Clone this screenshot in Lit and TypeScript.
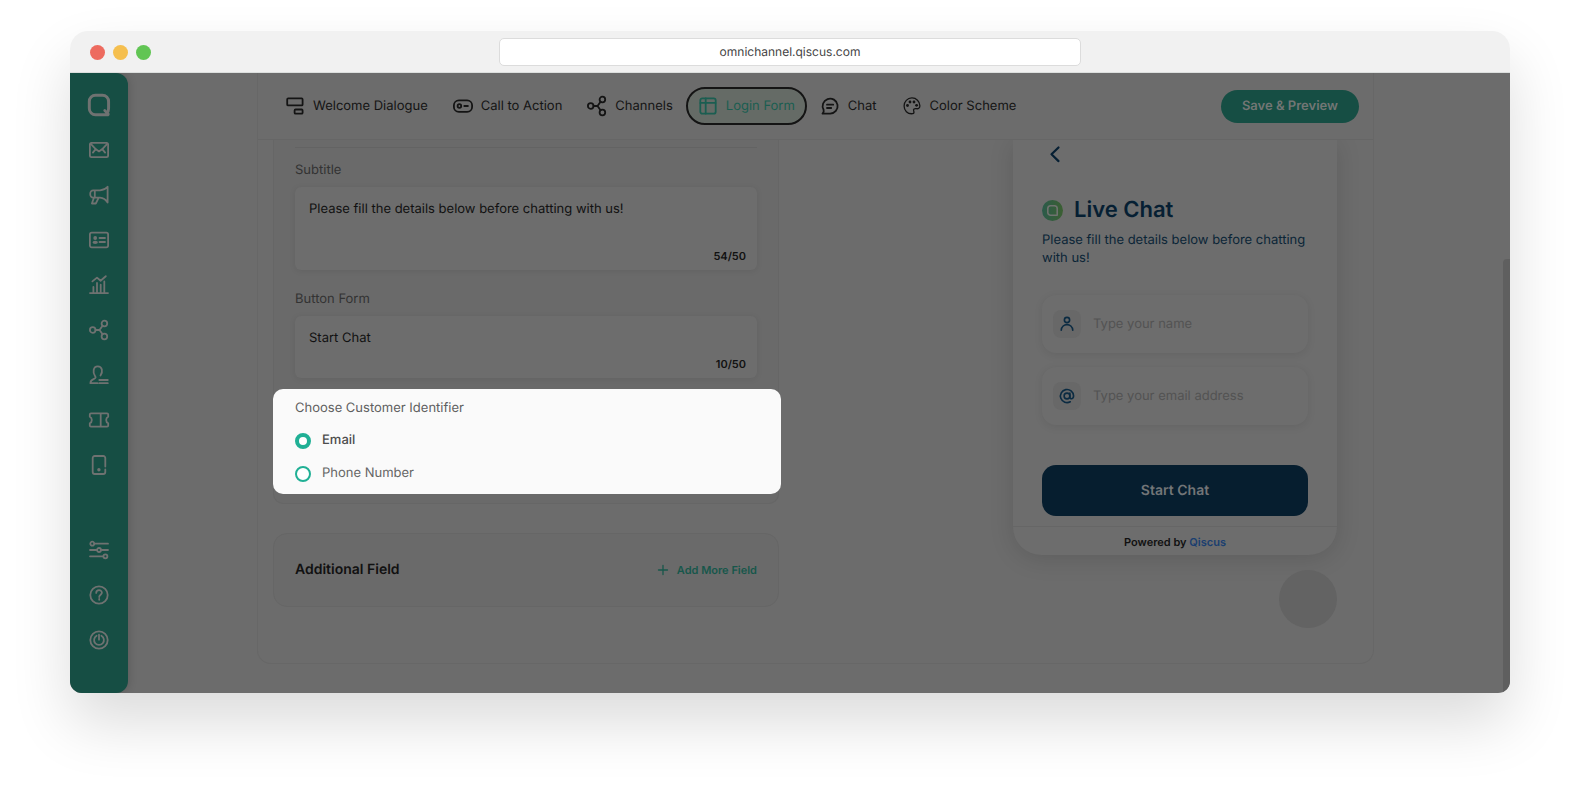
import { LitElement, html, css, svg, TemplateResult } from "lit";
import { customElement, property, state } from "lit/decorators.js";
import { classMap } from "lit/directives/class-map.js";

const icons: Record<string, TemplateResult> = {
  logo: svg`<path d="M15 19.400H8.300A5.600 5.600 0 0 1 2.400 13.600V7.300A5.600 5.600 0 0 1 8 1.600h6.300a5.600 5.600 0 0 1 5.600 5.700v6.300c0 2-.8 3.600-1.600 4.200l1 1.600Z" transform="translate(-1.200 -.5)" stroke-width="2.700"/><path d="M15.200 15l3.200 3.200" stroke-width="2.500"/>`,
  mail: svg`<rect x=".9" y="2.800" width="18.200" height="14.400" rx="1.600"/><path d="M1.800 3.800l4.900 5.300L10 11.400l3.300-2.300 4.900-5.300M6.700 9.100 3.900 12.600M13.300 9.100l2.800 3.500"/>`,
  megaphone: svg`<path d="M18.600 1.800v15.800c-2-3.200-4.600-4.700-7.600-4.900H4.200a3 3.700 0 0 1 0-7.400H11c3-.2 5.600-1 7.600-3.500ZM5.800 5.300v7.400M4.900 12.800l-2 5.700h3.900l2.800-5.600"/>`,
  contact: svg`<rect x=".9" y="2.700" width="18.200" height="14.600" rx="1.800"/><g class="solid"><circle cx="6.200" cy="8" r="1.900"/><ellipse cx="6.200" cy="12.300" rx="2.700" ry="1.600"/></g><path d="M10.500 8h5.500M10.500 12h5.500"/>`,
  chart: svg`<path d="M1 18.100h18M4.400 18v-6M8 18V8M11.700 18V9.700M15.300 18V6.400M3.400 6.400 8 2.600l3.600 3.100 5.200-4.500"/>`,
  share: svg`<circle cx="3.700" cy="10" r="2.800"/><circle cx="15.400" cy="3.500" r="2.800"/><circle cx="15.400" cy="16.500" r="2.800"/><path d="M6.500 10h4l3.100-4.300M10.500 10l3.100 4.300"/>`,
  agent: svg`<path d="M8.500 18.200H1.400c0-2.700 1.500-3.500 3.600-4.300 2-.7 1.900-1.700 1-2.900C3.600 7.800 4 1.400 8.700 1.400s5.400 5.400 2.800 9.200M10.300 15h8.500M10.300 18.200h8.500"/>`,
  ticket: svg`<path d="M1.900 3.300h16.200q1.100 0 1.100 1.100v2.300c-2.700 1.200-2.700 5.400 0 6.600v2.300q0 1.100-1.100 1.100H1.900q-1.100 0-1.100-1.100v-2.300c2.700-1.200 2.700-5.400 0-6.600V4.400q0-1.100 1.100-1.100ZM11.700 3.600v13"/>`,
  device: svg`<path d="M16.300 11.500V3a2 2 0 0 0-2-2H5.700a2 2 0 0 0-2 2v14a2 2 0 0 0 2 2h8.600a2 2 0 0 0 2-2v-2.500"/><circle class="solid" cx="9.900" cy="14.800" r="1.700"/>`,
  sliders: svg`<path d="M5.300 3.700H19M1 10h6.800M12.200 10H19M1 16.300h13.200"/><circle cx="3.300" cy="3.700" r="2"/><circle cx="10" cy="10" r="2"/><circle cx="16.400" cy="16.300" r="2"/>`,
  help: svg`<circle cx="10" cy="10" r="8.700"/><path d="M7.200 7.900c.1-3.600 5.700-3.500 5.700-.2 0 2-2.700 2-2.700 4.300M10.200 14v.8"/>`,
  power: svg`<circle cx="10" cy="10" r="8.700"/><path d="M7.600 5.800a4.900 4.900 0 1 0 4.800 0M10 4.700v5"/>`,
  dialogue: svg`<rect x="2.200" y="2.400" width="15.400" height="7" rx="1"/><rect x="9.600" y="13.500" width="8" height="4.200" rx="1"/>`,
  action: svg`<rect x=".9" y="4.300" width="18.200" height="11.600" rx="5"/><circle cx="6.400" cy="10" r="1.800"/><path d="M11.300 10h3.600"/>`,
  form: svg`<rect x="2.300" y="2.300" width="15.400" height="15.400" rx="2"/><path d="M7.700 2.500v15M2.500 6.900h15"/>`,
  chat: svg`<path d="M2.500 17.600h7.600A7.500 7.500 0 1 0 3.600 13.800Q4.300 15.800 2.500 17.600ZM7 8.700h6.200M7 12h4.200"/>`,
  palette: svg`<path d="M10.700 17.700C5.300 18.300 2.100 14.400 2.100 10a7.900 7.900 0 0 1 15.800-.3c0 2.500-1.700 3.300-3.500 3-2-.4-3.400.7-2.700 2.300.5 1.200.4 2.600-1 2.700Z" stroke-width="1.300"/><g class="solid"><circle cx="5.500" cy="9.500" r="1.400"/><circle cx="8" cy="6" r="1.400"/><circle cx="12" cy="6" r="1.400"/><circle cx="14.600" cy="9.300" r="1.400"/></g>`,
  user: svg`<circle cx="10" cy="5.600" r="2.900"/><path d="M3.600 16.900c.5-8.300 12.300-8.300 12.800 0"/>`,
  at: svg`<circle cx="10" cy="10" r="3.200"/><path d="M13.200 6.800v4.400c0 2.700 4.100 2.600 4.100-1.400A7.300 7.300 0 1 0 13.600 16.400"/>`,
  plus: svg`<path d="M10 5.500v9M5.500 10h9" stroke-width="1.300"/>`,
  back: svg`<path d="M13.500 3.500 6.500 10.300l7 6.800" stroke-width="2.200"/>`,
};

@customElement("ui-icon")
export class UiIcon extends LitElement {
  @property() name = "";

  static styles = css`
    :host { display: block; flex: none; width: 20px; height: 20px; }
    svg { display: block; width: 100%; height: 100%; overflow: visible; }
    .solid { fill: currentColor; stroke: none; }
  `;

  render() {
    return html`<svg viewBox="0 0 20 20" fill="none" stroke="currentColor" stroke-width="1.800"
      stroke-linecap="round" stroke-linejoin="round" aria-hidden="true">${icons[this.name]}</svg>`;
  }
}

@customElement("side-nav")
export class SideNav extends LitElement {
  static styles = css`
    :host {
      flex: none; width: 58px; display: flex; flex-direction: column; align-items: center;
      box-sizing: border-box; padding: 20px 0 0; background: #164e44;
      border-radius: 0 12px 12px 0; box-shadow: 1px 0 8px rgba(0, 0, 0, 0.16);
    }
    a { display: block; padding: 2px; margin-bottom: 21px; color: #6f7271; }
    .brand { padding: 1px; }
    .brand ui-icon { width: 22px; height: 22px; }
    .lower { margin-top: 40px; }
  `;

  render() {
    const upper = ["mail", "megaphone", "contact", "chart", "share", "agent", "ticket", "device"];
    const lower = ["sliders", "help", "power"];
    const link = (name: string) => html`<a href="#${name}" aria-label=${name}><ui-icon name=${name}></ui-icon></a>`;
    return html`
      <a class="brand" href="#home" aria-label="home"><ui-icon name="logo"></ui-icon></a>
      ${upper.map(link)}
      <div class="lower">${lower.map(link)}</div>
    `;
  }
}

@customElement("chat-preview")
export class ChatPreview extends LitElement {
  static styles = css`
    :host { display: block; flex: none; width: 324px; }
    .phone {
      border-radius: 0 0 28px 28px; background: #6d6d6d;
      box-shadow: 0 4px 24px rgba(0, 0, 0, 0.13);
    }
    .content { padding: 4px 29px 10px; }
    button { font: inherit; border: 0; padding: 0; cursor: pointer; text-rendering: inherit; }
    .back { display: block; background: none; color: #061f33; margin: 0 0 32px 3px; }
    .heading { display: flex; align-items: center; gap: 11px; }
    .badge { width: 21px; height: 21px; flex: none; }
    h1 { margin: 0; font-size: 22px; line-height: 28px; font-weight: 600; color: #061f33; }
    p { margin: 7px 0 28px; font-size: 13px; line-height: 18px; color: #0b2537; }
    .field {
      display: flex; align-items: center; gap: 12px; height: 58px; padding: 0 11px; margin-bottom: 14px;
      box-sizing: border-box; border-radius: 14px; background: #6d6d6d;
      box-shadow: 0 2px 8px rgba(0, 0, 0, 0.08);
    }
    .tile {
      display: grid; place-items: center; flex: none; width: 28px; height: 28px;
      border-radius: 8px; background: #686868; color: #0b2b42;
    }
    .tile ui-icon { width: 18px; height: 18px; }
    input {
      flex: 1; min-width: 0; border: 0; outline: 0; padding: 0; background: none;
      font: inherit; font-size: 13px; line-height: 20px; color: #141414; text-rendering: inherit;
    }
    input::placeholder { color: #535353; opacity: 1; }
    .start {
      display: block; width: 100%; height: 51px; margin-top: 40px; border-radius: 14px;
      background: #061e2f; color: #727577; font-size: 14px; font-weight: 600;
    }
    footer {
      border-top: 1px solid #666; text-align: center; font-size: 11px; line-height: 16px;
      font-weight: 600; padding: 7px 0 5px; color: #111;
    }
    footer a { color: #1b3f70; text-decoration: none; }
    .launcher {
      display: block; width: 58px; height: 58px; margin: 15px 0 0 auto; border-radius: 50%; background: #636363;
    }
  `;

  render() {
    return html`
      <div class="phone">
        <div class="content">
          <button class="back" aria-label="Back"><ui-icon name="back"></ui-icon></button>
          <div class="heading">
            <svg class="badge" viewBox="0 0 21 21" aria-hidden="true">
              <defs><linearGradient id="g" x1="0" x2="1"><stop stop-color="#2b5a4a"/><stop offset="1" stop-color="#3b5f32"/></linearGradient></defs>
              <circle cx="10.500" cy="10.500" r="10.500" fill="url(#g)"/>
              <path d="M15.200 15.200H8.600a2.800 2.800 0 0 1-2.800-2.800V8.600a2.800 2.800 0 0 1 2.800-2.800h3.800a2.800 2.800 0 0 1 2.800 2.800Z" fill="none" stroke="#6f726f" stroke-width="1.600" stroke-linejoin="round"/>
            </svg>
            <h1>Live Chat</h1>
          </div>
          <p>Please fill the details below before chatting with us!</p>
          <label class="field"><span class="tile"><ui-icon name="user"></ui-icon></span><input type="text" placeholder="Type your name" aria-label="Name"></label>
          <label class="field"><span class="tile"><ui-icon name="at"></ui-icon></span><input type="email" placeholder="Type your email address" aria-label="Email address"></label>
          <button class="start">Start Chat</button>
        </div>
        <footer>Powered by <a href="#qiscus">Qiscus</a></footer>
      </div>
      <button class="launcher" aria-label="Open chat"></button>
    `;
  }
}

@customElement("login-form-editor")
export class LoginFormEditor extends LitElement {
  @state() private identifier = "email";

  static styles = css`
    :host { display: block; flex: 0 1 506px; min-width: 0; }
    .card { border: 1px solid #666; background: #6a6a6a; padding: 0 21px; }
    .texts { border-top: 0; border-radius: 0 0 10px 10px; padding-top: 7px; padding-bottom: 9px; }
    .texts hr { border: 0; border-top: 1px solid #636363; margin: 0 0 12px; }
    .label { display: block; font-size: 13px; line-height: 20px; color: #333; }
    .box {
      display: flex; flex-direction: column; box-sizing: border-box; margin: 7px 0 19px; padding: 12px 11px 6px 14px;
      border-radius: 6px; background: #6d6d6d; box-shadow: 0 1px 6px rgba(0, 0, 0, 0.08);
    }
    .box.last { margin-bottom: 11px; }
    textarea, .box input {
      display: block; width: 100%; border: 0; outline: 0; padding: 0; resize: none; background: none;
      font: inherit; font-size: 13px; line-height: 20px; height: 20px; color: #111; text-rendering: inherit;
    }
    .box textarea { height: 41px; }
    .count { align-self: flex-end; font-size: 11px; line-height: 16px; font-weight: 600; margin-top: 8px; color: #111; }
    .identifier {
      margin: 0 -24px 0 -22px; padding: 9px 24px 10px 22px; border-radius: 10px; background: #fafafa; position: relative;
    }
    .identifier .label { color: #5f5f5f; }
    .choice { display: flex; align-items: center; gap: 11px; margin-top: 12px; font-size: 13px; line-height: 21px; color: #666; }
    .choice.on { color: #4d4d4d; font-weight: 500; }
    .choice input {
      appearance: none; margin: 0; width: 16px; height: 16px; box-sizing: border-box;
      border: 2px solid #20b095; border-radius: 50%; background: #fff;
    }
    .choice input:checked { border-width: 4px; }
    .extra {
      display: flex; align-items: center; justify-content: space-between; margin-top: 29px;
      border-radius: 14px; padding-top: 24px; padding-bottom: 24px;
    }
    h2 { margin: 0; font-size: 14px; line-height: 24px; font-weight: 600; color: #111; }
    .add {
      display: flex; align-items: center; gap: 4px; border: 0; padding: 0; background: none;
      font: inherit; font-size: 11px; line-height: 20px; font-weight: 600; color: #17574b; cursor: pointer;
      text-rendering: inherit;
    }
  `;

  private choice(value: string, text: string) {
    const on = this.identifier === value;
    return html`<label class=${classMap({ choice: true, on })}>
      <input type="radio" name="identifier" value=${value} .checked=${on} @change=${() => (this.identifier = value)}>${text}
    </label>`;
  }

  render() {
    return html`
      <section class="card texts">
        <hr>
        <label class="label" for="subtitle">Subtitle</label>
        <div class="box"><textarea id="subtitle" .value=${"Please fill the details below before chatting with us!"}></textarea><span class="count">54/50</span></div>
        <label class="label" for="button">Button Form</label>
        <div class="box last"><input id="button" type="text" .value=${"Start Chat"}><span class="count">10/50</span></div>
        <div class="identifier" role="radiogroup" aria-labelledby="identifier-label">
          <span class="label" id="identifier-label">Choose Customer Identifier</span>
          ${this.choice("email", "Email")}
          ${this.choice("phone", "Phone Number")}
        </div>
      </section>
      <section class="card extra">
        <h2>Additional Field</h2>
        <button class="add"><ui-icon name="plus"></ui-icon>Add More Field</button>
      </section>
    `;
  }
}

@customElement("app-root")
export class AppRoot extends LitElement {
  @state() private tab = "form";

  static styles = css`
    :host {
      display: block; box-sizing: border-box; min-height: 100vh; padding: 31px 70px 109px;
      background: #fff; font-family: Inter, "Liberation Sans", sans-serif; overflow: hidden;
      text-rendering: geometricPrecision;
    }
    .window {
      display: flex; flex-direction: column; height: calc(100vh - 140px); min-height: 600px;
      border-radius: 18px 18px 12px 12px; box-shadow: 0 30px 60px rgba(0, 0, 0, 0.14);
    }
    .titlebar {
      flex: none; display: grid; grid-template-columns: 1fr 582px 1fr; align-items: center; height: 42px;
      box-sizing: border-box; border-bottom: 1px solid #dcdfde; border-radius: 18px 18px 0 0; background: #f1f1f1;
    }
    .lights { display: flex; gap: 8px; padding: 2px 0 0 20px; }
    .light { width: 15px; height: 15px; border-radius: 50%; }
    .red { background: #ed6b5f; }
    .amber { background: #f5bf4f; }
    .green { background: #61c554; }
    .address {
      height: 28px; box-sizing: border-box; border: 1px solid #dcdcdc; border-radius: 5px; background: #fff;
      padding: 0; font: inherit; font-size: 12px; text-align: center; color: #444; outline: 0; width: 100%;
      text-rendering: inherit;
    }
    .page { flex: 1; min-height: 0; display: flex; overflow: hidden; border-radius: 0 0 12px 12px; background: #6c6c6c; }
    main { flex: 1; min-width: 0; padding: 0 129px; }
    .panel { border: 1px solid #676767; border-top: 0; border-radius: 0 0 14px 14px; padding-bottom: 35px; }
    .tabs {
      position: relative; display: flex; align-items: center; height: 67px; padding: 0 14px 0 15px; background: #6c6c6c;
      box-sizing: border-box; border-bottom: 1px solid #666;
    }
    nav { display: flex; gap: 1px; flex: 1; }
    nav button, .save { font: inherit; font-size: 13px; line-height: 20px; background: none; cursor: pointer; white-space: nowrap; text-rendering: inherit; }
    .tab {
      display: flex; align-items: center; gap: 8px; height: 38px; padding: 0 10px; color: #141414;
      border: 2px solid transparent; border-radius: 19px;
    }
    .tab.active { border-color: #141414; background: #656b66; color: #1b5e51; }
    .save { height: 33px; padding: 0 21px; border: 0; border-radius: 17px; background: #164e44; color: #727675; font-weight: 600; }
    .columns { display: flex; justify-content: space-between; gap: 24px; padding: 0 36px 0 15px; }
    .scroll { flex: none; width: 7px; height: 70%; align-self: flex-end; border-radius: 4px 0 0 0; background: #5f5f5f; }
  `;

  render() {
    const tabs = [
      ["dialogue", "Welcome Dialogue"],
      ["action", "Call to Action"],
      ["share", "Channels"],
      ["form", "Login Form"],
      ["chat", "Chat"],
      ["palette", "Color Scheme"],
    ];
    return html`
      <div class="window">
        <header class="titlebar">
          <div class="lights"><span class="light red"></span><span class="light amber"></span><span class="light green"></span></div>
          <input class="address" type="text" aria-label="Address" .value=${"omnichannel.qiscus.com"}>
        </header>
        <div class="page">
          <side-nav></side-nav>
          <main>
            <div class="panel">
              <div class="tabs">
                <nav>
                  ${tabs.map(([id, text]) => html`<button class=${classMap({ tab: true, active: this.tab === id })}
                    @click=${() => (this.tab = id)}><ui-icon name=${id}></ui-icon>${text}</button>`)}
                </nav>
                <button class="save">Save &amp; Preview</button>
              </div>
              <div class="columns">
                <login-form-editor></login-form-editor>
                <chat-preview></chat-preview>
              </div>
            </div>
          </main>
          <div class="scroll"></div>
        </div>
      </div>
    `;
  }
}
